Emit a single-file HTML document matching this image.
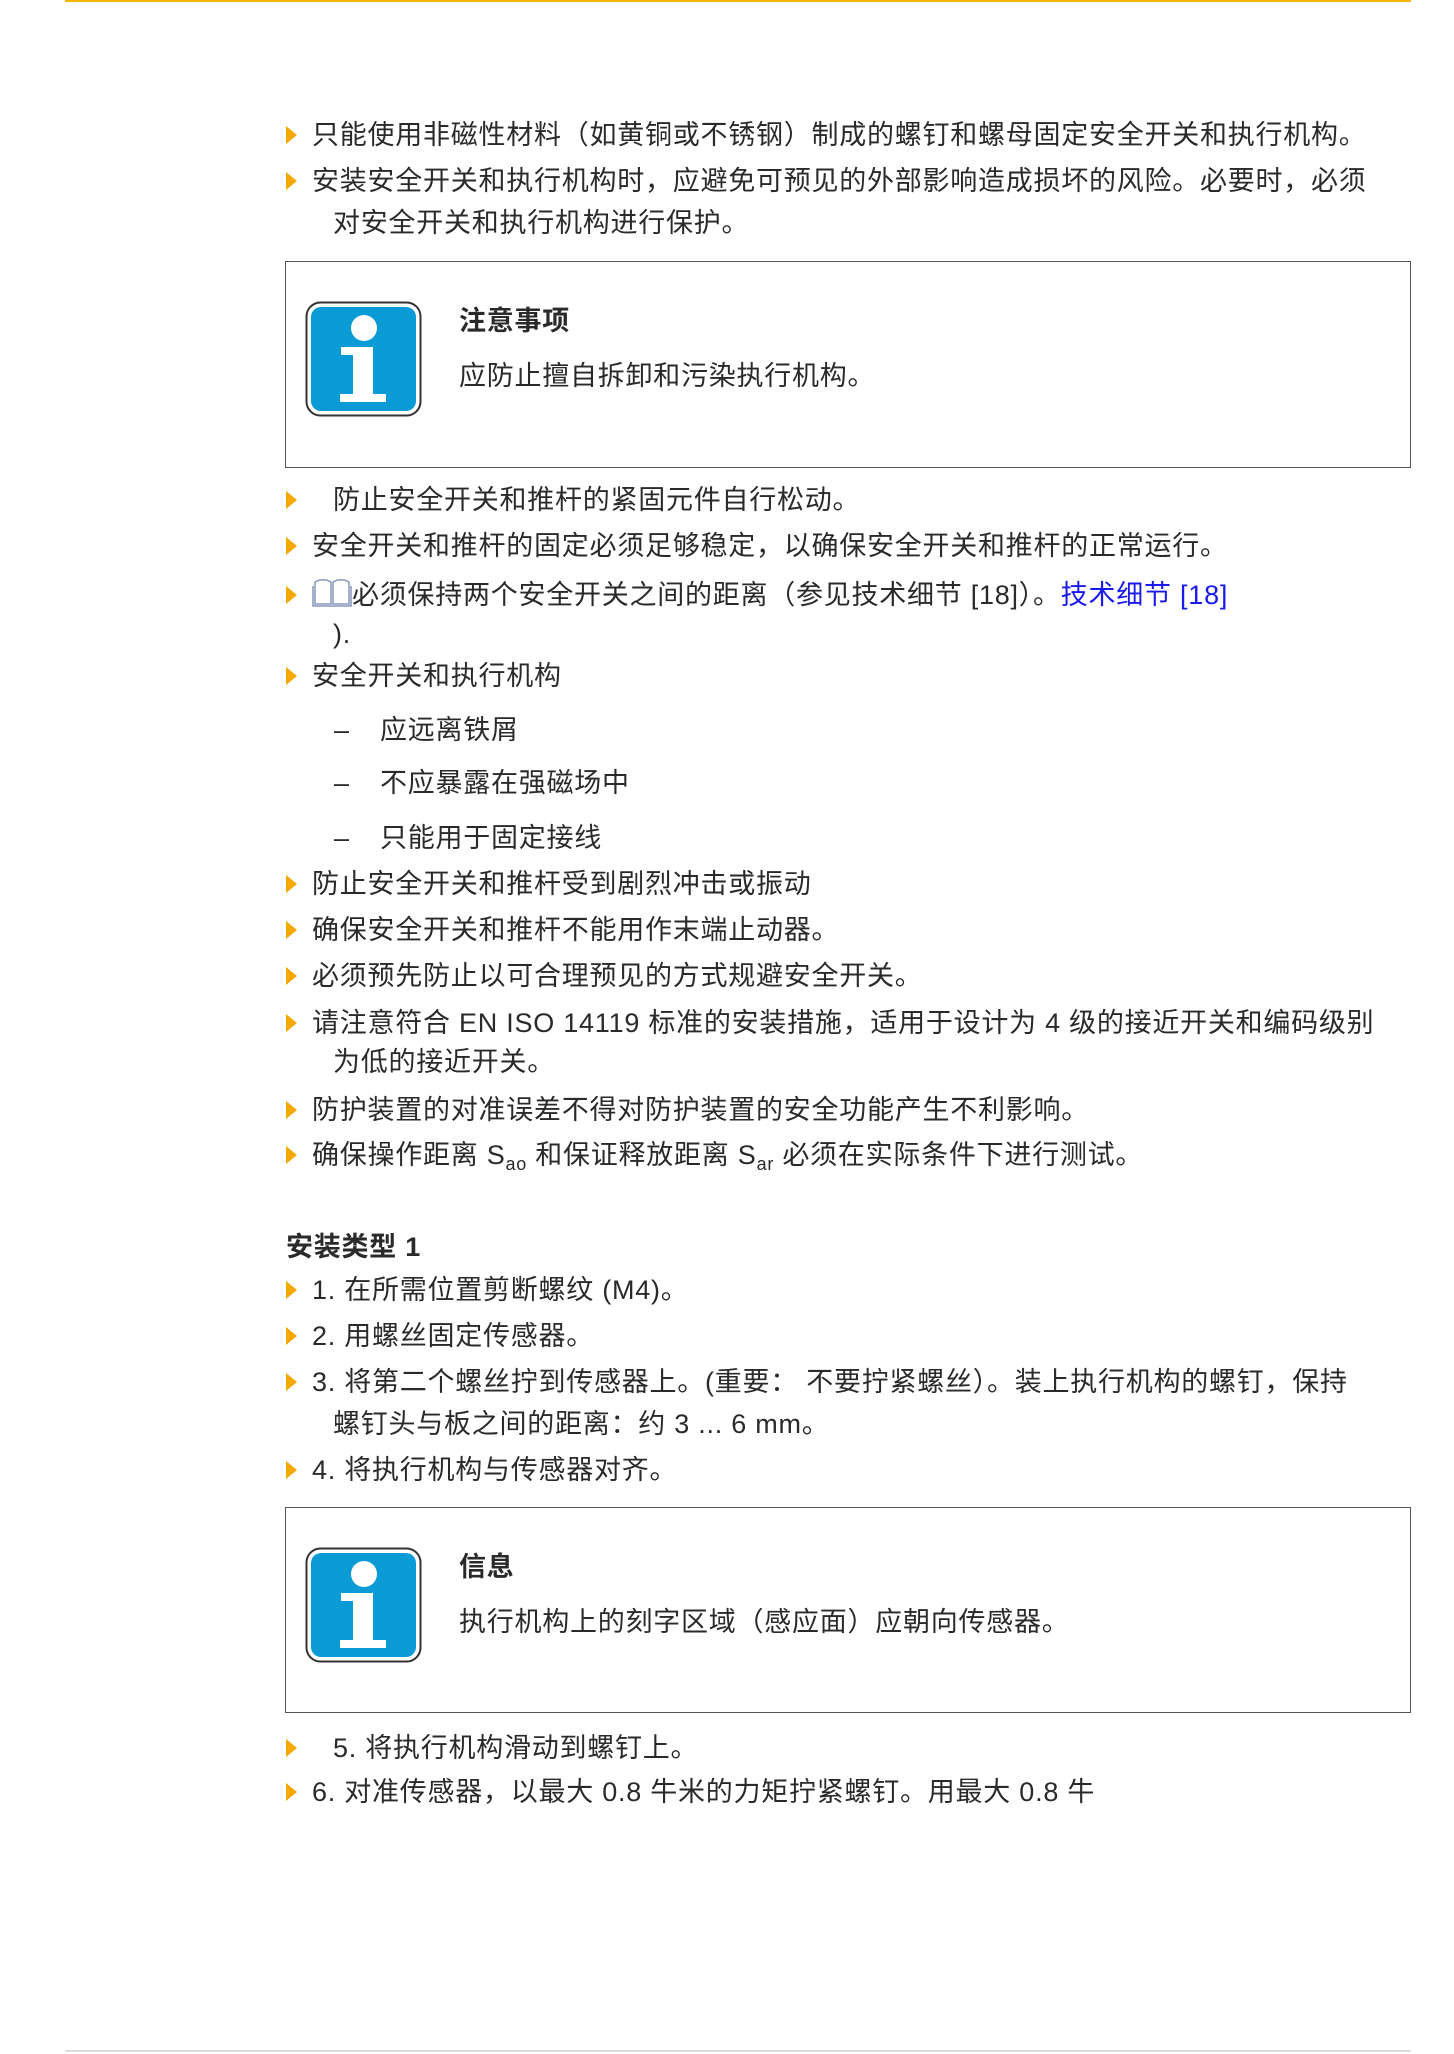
<!DOCTYPE html>
<html><head><meta charset="utf-8">
<style>
html,body{margin:0;padding:0;background:#fff;}
body{width:1454px;height:2054px;position:relative;overflow:hidden;font-family:"Liberation Sans","Noto Sans CJK SC",sans-serif;color:#2a2a2a;font-size:27px;letter-spacing:0.75px;}
.l{position:absolute;left:312px;height:34px;line-height:34px;white-space:nowrap;}
.b{position:absolute;left:286px;width:0;height:0;border-top:9px solid transparent;border-bottom:9px solid transparent;border-left:11px solid #f5a800;}
.box{position:absolute;left:285px;width:1126px;border:1.5px solid #555;box-sizing:border-box;}
.ic{position:absolute;left:305px;}
.t{position:absolute;left:459px;font-weight:bold;font-size:27px;line-height:34px;}
.d{position:absolute;left:333px;line-height:34px;}
sub{font-size:18px;vertical-align:-6px;line-height:0;}
a{color:#1a1aee;text-decoration:none;}
</style></head><body>
<div style="position:absolute;left:65px;top:0;width:1346px;height:2px;background:#f5b400"></div>
<div style="position:absolute;left:65px;top:2050px;width:1346px;height:2px;background:#ddd"></div>

<div class="b" style="top:126px"></div><div class="l" style="top:118px">只能使用非磁性材料（如黄铜或不锈钢）制成的螺钉和螺母固定安全开关和执行机构。</div>
<div class="b" style="top:172px"></div><div class="l" style="top:164px">安装安全开关和执行机构时，应避免可预见的外部影响造成损坏的风险。必要时，必须</div>
<div class="l" style="top:206px;left:333px">对安全开关和执行机构进行保护。</div>

<div class="box" style="top:261px;height:207px"></div>
<svg class="ic" style="top:301px" width="117" height="116" viewBox="0 0 117 116"><rect x="1.5" y="1.5" width="114" height="113" rx="14" fill="#fff" stroke="#333" stroke-width="2"/><rect x="6" y="6" width="105" height="104" rx="10" fill="#0a9ad6"/><circle cx="59" cy="27" r="13" fill="#fff"/><path d="M36 46h32v47h13v8H35v-8h13V54H36z" fill="#fff"/></svg>
<div class="t" style="top:304px">注意事项</div>
<div class="l" style="top:359px;left:459px">应防止擅自拆卸和污染执行机构。</div>

<div class="b" style="top:491px"></div><div class="l" style="top:483px;left:333px">防止安全开关和推杆的紧固元件自行松动。</div>
<div class="b" style="top:537px"></div><div class="l" style="top:529px">安全开关和推杆的固定必须足够稳定，以确保安全开关和推杆的正常运行。</div>
<div class="b" style="top:586px"></div><div class="l" style="top:578px"><svg width="40" height="30" viewBox="0 0 40 30" style="vertical-align:-4px"><path d="M3 4v22h16v-22C14 1 8 1 3 4zM21 4v22h16V4c-5-3-11-3-16 0zM1 8v20h38V8" fill="none" stroke="#8899bb" stroke-width="1.5"/></svg>必须保持两个安全开关之间的距离（参见技术细节 [18]）。<a>技术细节 [18]</a></div>
<div class="l" style="top:617px;left:333px">).</div>
<div class="b" style="top:667px"></div><div class="l" style="top:659px">安全开关和执行机构</div>
<div class="d" style="top:713px;left:334px">–</div><div class="l" style="top:713px;left:380px">应远离铁屑</div>
<div class="d" style="top:766px;left:334px">–</div><div class="l" style="top:766px;left:380px">不应暴露在强磁场中</div>
<div class="d" style="top:821px;left:334px">–</div><div class="l" style="top:821px;left:380px">只能用于固定接线</div>
<div class="b" style="top:875px"></div><div class="l" style="top:867px">防止安全开关和推杆受到剧烈冲击或振动</div>
<div class="b" style="top:921px"></div><div class="l" style="top:913px">确保安全开关和推杆不能用作末端止动器。</div>
<div class="b" style="top:967px"></div><div class="l" style="top:959px">必须预先防止以可合理预见的方式规避安全开关。</div>
<div class="b" style="top:1014px"></div><div class="l" style="top:1006px">请注意符合 EN ISO 14119 标准的安装措施，适用于设计为 4 级的接近开关和编码级别</div>
<div class="l" style="top:1045px;left:333px">为低的接近开关。</div>
<div class="b" style="top:1101px"></div><div class="l" style="top:1093px">防护装置的对准误差不得对防护装置的安全功能产生不利影响。</div>
<div class="b" style="top:1146px"></div><div class="l" style="top:1138px">确保操作距离 S<sub>ao</sub> 和保证释放距离 S<sub>ar</sub> 必须在实际条件下进行测试。</div>

<div class="l" style="top:1230px;left:286px;font-weight:bold">安装类型 1</div>
<div class="b" style="top:1281px"></div><div class="l" style="top:1273px">1. 在所需位置剪断螺纹 (M4)。</div>
<div class="b" style="top:1327px"></div><div class="l" style="top:1319px">2. 用螺丝固定传感器。</div>
<div class="b" style="top:1373px"></div><div class="l" style="top:1365px">3. 将第二个螺丝拧到传感器上。(重要： 不要拧紧螺丝）。装上执行机构的螺钉，保持</div>
<div class="l" style="top:1407px;left:333px">螺钉头与板之间的距离：约 3 ... 6 mm。</div>
<div class="b" style="top:1461px"></div><div class="l" style="top:1453px">4. 将执行机构与传感器对齐。</div>

<div class="box" style="top:1507px;height:206px"></div>
<svg class="ic" style="top:1547px" width="117" height="116" viewBox="0 0 117 116"><rect x="1.5" y="1.5" width="114" height="113" rx="14" fill="#fff" stroke="#333" stroke-width="2"/><rect x="6" y="6" width="105" height="104" rx="10" fill="#0a9ad6"/><circle cx="59" cy="27" r="13" fill="#fff"/><path d="M36 46h32v47h13v8H35v-8h13V54H36z" fill="#fff"/></svg>
<div class="t" style="top:1550px">信息</div>
<div class="l" style="top:1605px;left:459px">执行机构上的刻字区域（感应面）应朝向传感器。</div>

<div class="b" style="top:1739px"></div><div class="l" style="top:1731px;left:333px">5. 将执行机构滑动到螺钉上。</div>
<div class="b" style="top:1783px"></div><div class="l" style="top:1775px">6. 对准传感器，以最大 0.8 牛米的力矩拧紧螺钉。用最大 0.8 牛</div>
</body></html>
